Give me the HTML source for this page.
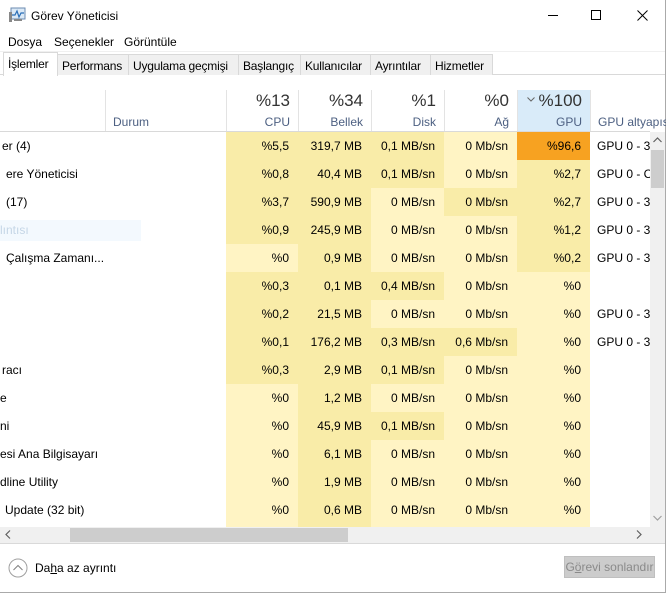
<!DOCTYPE html>
<html><head><meta charset="utf-8"><style>
*{margin:0;padding:0;box-sizing:border-box}
body{width:666px;height:593px;overflow:hidden;background:#fff;font-family:"Liberation Sans",sans-serif;font-size:12px;color:#000;position:relative}
.a{position:absolute}
.tab{position:absolute;top:54px;height:21px;border:1px solid #d9d9d9;border-bottom:none;background:#f0f0f0;padding:4px 0 0 4px;font-size:12px;white-space:nowrap;letter-spacing:-0.2px}
.row{position:absolute;left:0;height:28px;width:650px;overflow:hidden}
.c{position:absolute;top:0;height:28px;line-height:28px;text-align:right;padding-right:9px;white-space:nowrap}
.D{background:#f9eca8}.L{background:#fff4c4}.O{background:#f7a221}
.hd{position:absolute;top:90px;height:41px;border-left:1px solid #e3e3e3;text-align:right;padding-right:8px;white-space:nowrap;overflow:hidden}
.hd .p{font-size:17px;color:#333;margin-top:1px;line-height:20px}
.hd .n{font-size:12px;color:#4d6082;margin-top:4px}
</style></head><body>
<svg class="a" style="left:8px;top:7px" width="18" height="16" viewBox="0 0 18 16"><rect x="3" y="1" width="14" height="11" fill="#dbe9f6" stroke="#6b8bb0"/><polyline points="4,8 7,8 9,4 11,10 13,6 16,6" fill="none" stroke="#2a6fb8" stroke-width="1.2"/><rect x="1" y="5" width="3" height="10" fill="#888"/><rect x="6" y="12" width="8" height="2" fill="#888"/></svg>
<div class="a" style="left:31px;top:9px;font-size:12px">Görev Yöneticisi</div>
<div class="a" style="left:548px;top:15px;width:10px;height:1px;background:#000"></div>
<div class="a" style="left:591px;top:10px;width:10px;height:10px;border:1px solid #000"></div>
<svg class="a" style="left:637px;top:10px" width="11" height="11"><path d="M0.5 0.5L10.5 10.5M10.5 0.5L0.5 10.5" stroke="#000" stroke-width="1"/></svg>
<div class="a" style="left:665px;top:0;width:1px;height:593px;background:#aaa"></div>
<div class="a" style="left:8px;top:35px">Dosya</div>
<div class="a" style="left:54px;top:35px">Seçenekler</div>
<div class="a" style="left:124px;top:35px">Görüntüle</div>
<div class="a" style="left:0;top:51px;width:665px;height:1px;background:#f0f0f0"></div>
<div class="a" style="left:0;top:74px;width:665px;height:1px;background:#d9d9d9"></div>
<div class="tab" style="left:57px;width:72px">Performans</div>
<div class="tab" style="left:128px;width:111px">Uygulama geçmişi</div>
<div class="tab" style="left:238px;width:63px">Başlangıç</div>
<div class="tab" style="left:300px;width:71px">Kullanıcılar</div>
<div class="tab" style="left:370px;width:61px">Ayrıntılar</div>
<div class="tab" style="left:430px;width:63px">Hizmetler</div>
<div class="tab" style="left:3px;top:52px;width:55px;height:24px;background:#fff;padding-top:4px">İşlemler</div>
<div class="hd" style="left:105px;width:121px;text-align:left;padding-left:7px"><div class="p">&nbsp;</div><div class="n">Durum</div></div>
<div class="hd" style="left:226px;width:72px"><div class="p">%13</div><div class="n">CPU</div></div>
<div class="hd" style="left:298px;width:73px"><div class="p">%34</div><div class="n">Bellek</div></div>
<div class="hd" style="left:371px;width:73px"><div class="p">%1</div><div class="n">Disk</div></div>
<div class="hd" style="left:444px;width:73px"><div class="p">%0</div><div class="n">Ağ</div></div>
<div class="hd" style="left:517px;width:73px;background:#d9ebf9"><div class="p">%100</div><div class="n">GPU</div></div>
<svg class="a" style="left:527px;top:97px" width="8" height="5"><path d="M0.5 0.5L4 4L7.5 0.5" fill="none" stroke="#666"/></svg>
<div class="hd" style="left:590px;width:76px;text-align:left;padding-left:7px"><div class="p">&nbsp;</div><div class="n">GPU altyapısı</div></div>
<div class="a" style="left:0;top:131px;width:650px;height:1px;background:#d9d9d9"></div>
<div class="a" style="left:0;top:220px;width:141px;height:21px;background:#f3f9fe"></div>
<div class="row" style="top:132px"><div class="c" style="left:2px;text-align:left">er (4)</div><div class="c D" style="left:226px;width:72px">%5,5</div><div class="c D" style="left:298px;width:73px">319,7 MB</div><div class="c D" style="left:371px;width:73px">0,1 MB/sn</div><div class="c L" style="left:444px;width:73px">0 Mb/sn</div><div class="c O" style="left:517px;width:73px">%96,6</div><div class="c" style="left:597px;text-align:left">GPU 0 - 3D</div></div>
<div class="row" style="top:160px"><div class="c" style="left:6px;text-align:left">ere Yöneticisi</div><div class="c D" style="left:226px;width:72px">%0,8</div><div class="c D" style="left:298px;width:73px">40,4 MB</div><div class="c D" style="left:371px;width:73px">0,1 MB/sn</div><div class="c L" style="left:444px;width:73px">0 Mb/sn</div><div class="c D" style="left:517px;width:73px">%2,7</div><div class="c" style="left:597px;text-align:left">GPU 0 - C</div></div>
<div class="row" style="top:188px"><div class="c" style="left:6px;text-align:left">(17)</div><div class="c D" style="left:226px;width:72px">%3,7</div><div class="c D" style="left:298px;width:73px">590,9 MB</div><div class="c L" style="left:371px;width:73px">0 MB/sn</div><div class="c D" style="left:444px;width:73px">0 Mb/sn</div><div class="c D" style="left:517px;width:73px">%2,7</div><div class="c" style="left:597px;text-align:left">GPU 0 - 3D</div></div>
<div class="row" style="top:216px"><div class="c" style="left:0px;text-align:left;color:#c5d6e6">lıntısı</div><div class="c D" style="left:226px;width:72px">%0,9</div><div class="c D" style="left:298px;width:73px">245,9 MB</div><div class="c L" style="left:371px;width:73px">0 MB/sn</div><div class="c L" style="left:444px;width:73px">0 Mb/sn</div><div class="c D" style="left:517px;width:73px">%1,2</div><div class="c" style="left:597px;text-align:left">GPU 0 - 3D</div></div>
<div class="row" style="top:244px"><div class="c" style="left:6px;text-align:left">Çalışma Zamanı...</div><div class="c L" style="left:226px;width:72px">%0</div><div class="c D" style="left:298px;width:73px">0,9 MB</div><div class="c L" style="left:371px;width:73px">0 MB/sn</div><div class="c L" style="left:444px;width:73px">0 Mb/sn</div><div class="c D" style="left:517px;width:73px">%0,2</div><div class="c" style="left:597px;text-align:left">GPU 0 - 3D</div></div>
<div class="row" style="top:272px"><div class="c D" style="left:226px;width:72px">%0,3</div><div class="c D" style="left:298px;width:73px">0,1 MB</div><div class="c D" style="left:371px;width:73px">0,4 MB/sn</div><div class="c L" style="left:444px;width:73px">0 Mb/sn</div><div class="c L" style="left:517px;width:73px">%0</div></div>
<div class="row" style="top:300px"><div class="c D" style="left:226px;width:72px">%0,2</div><div class="c D" style="left:298px;width:73px">21,5 MB</div><div class="c L" style="left:371px;width:73px">0 MB/sn</div><div class="c L" style="left:444px;width:73px">0 Mb/sn</div><div class="c L" style="left:517px;width:73px">%0</div><div class="c" style="left:597px;text-align:left">GPU 0 - 3D</div></div>
<div class="row" style="top:328px"><div class="c D" style="left:226px;width:72px">%0,1</div><div class="c D" style="left:298px;width:73px">176,2 MB</div><div class="c D" style="left:371px;width:73px">0,3 MB/sn</div><div class="c D" style="left:444px;width:73px">0,6 Mb/sn</div><div class="c L" style="left:517px;width:73px">%0</div><div class="c" style="left:597px;text-align:left">GPU 0 - 3D</div></div>
<div class="row" style="top:356px"><div class="c" style="left:2px;text-align:left">racı</div><div class="c D" style="left:226px;width:72px">%0,3</div><div class="c D" style="left:298px;width:73px">2,9 MB</div><div class="c D" style="left:371px;width:73px">0,1 MB/sn</div><div class="c L" style="left:444px;width:73px">0 Mb/sn</div><div class="c L" style="left:517px;width:73px">%0</div></div>
<div class="row" style="top:384px"><div class="c" style="left:0px;text-align:left">e</div><div class="c L" style="left:226px;width:72px">%0</div><div class="c D" style="left:298px;width:73px">1,2 MB</div><div class="c L" style="left:371px;width:73px">0 MB/sn</div><div class="c L" style="left:444px;width:73px">0 Mb/sn</div><div class="c L" style="left:517px;width:73px">%0</div></div>
<div class="row" style="top:412px"><div class="c" style="left:0px;text-align:left">ni</div><div class="c L" style="left:226px;width:72px">%0</div><div class="c D" style="left:298px;width:73px">45,9 MB</div><div class="c D" style="left:371px;width:73px">0,1 MB/sn</div><div class="c L" style="left:444px;width:73px">0 Mb/sn</div><div class="c L" style="left:517px;width:73px">%0</div></div>
<div class="row" style="top:440px"><div class="c" style="left:0px;text-align:left">esi Ana Bilgisayarı</div><div class="c L" style="left:226px;width:72px">%0</div><div class="c D" style="left:298px;width:73px">6,1 MB</div><div class="c L" style="left:371px;width:73px">0 MB/sn</div><div class="c L" style="left:444px;width:73px">0 Mb/sn</div><div class="c L" style="left:517px;width:73px">%0</div></div>
<div class="row" style="top:468px"><div class="c" style="left:0px;text-align:left">dline Utility</div><div class="c L" style="left:226px;width:72px">%0</div><div class="c D" style="left:298px;width:73px">1,9 MB</div><div class="c L" style="left:371px;width:73px">0 MB/sn</div><div class="c L" style="left:444px;width:73px">0 Mb/sn</div><div class="c L" style="left:517px;width:73px">%0</div></div>
<div class="row" style="top:496px;height:31px"><div class="c" style="left:5px;text-align:left">Update (32 bit)</div><div class="c L" style="left:226px;width:72px;height:31px">%0</div><div class="c D" style="left:298px;width:73px;height:31px">0,6 MB</div><div class="c L" style="left:371px;width:73px;height:31px">0 MB/sn</div><div class="c L" style="left:444px;width:73px;height:31px">0 Mb/sn</div><div class="c L" style="left:517px;width:73px;height:31px">%0</div></div>
<div class="a" style="left:650px;top:132px;width:15px;height:395px;background:#f0f0f0"></div>
<div class="a" style="left:651px;top:150px;width:13px;height:38px;background:#cdcdcd"></div>
<svg class="a" style="left:653px;top:137px" width="9" height="6"><path d="M0.5 5L4.5 1L8.5 5" fill="none" stroke="#606060" stroke-width="1.2"/></svg>
<svg class="a" style="left:653px;top:515px" width="9" height="6"><path d="M0.5 1L4.5 5L8.5 1" fill="none" stroke="#a0a0a0" stroke-width="1.2"/></svg>
<div class="a" style="left:0;top:527px;width:665px;height:16px;background:#f0f0f0"></div>
<div class="a" style="left:70px;top:528px;width:278px;height:14px;background:#cdcdcd"></div>
<svg class="a" style="left:5px;top:530px" width="6" height="9"><path d="M5 0.5L1 4.5L5 8.5" fill="none" stroke="#606060" stroke-width="1.2"/></svg>
<svg class="a" style="left:636px;top:530px" width="6" height="9"><path d="M1 0.5L5 4.5L1 8.5" fill="none" stroke="#606060" stroke-width="1.2"/></svg>
<div class="a" style="left:0;top:543px;width:665px;height:1px;background:#d9d9d9"></div>
<svg class="a" style="left:8px;top:558px" width="20" height="20"><circle cx="10" cy="10" r="9" fill="none" stroke="#a0a0a0"/><path d="M5.5 12L10 7.5L14.5 12" fill="none" stroke="#808080"/></svg>
<div class="a" style="left:35px;top:561px">Da<u>h</u>a az ayrıntı</div>
<div class="a" style="left:564px;top:556px;width:91px;height:22px;background:#cccccc;border:1px solid #bfbfbf;color:#8a8a8a;text-align:center;line-height:20px;white-space:nowrap">G<u>ö</u>revi sonlandır</div>
<div class="a" style="left:0;top:592px;width:666px;height:1px;background:#aaa"></div>
</body></html>
